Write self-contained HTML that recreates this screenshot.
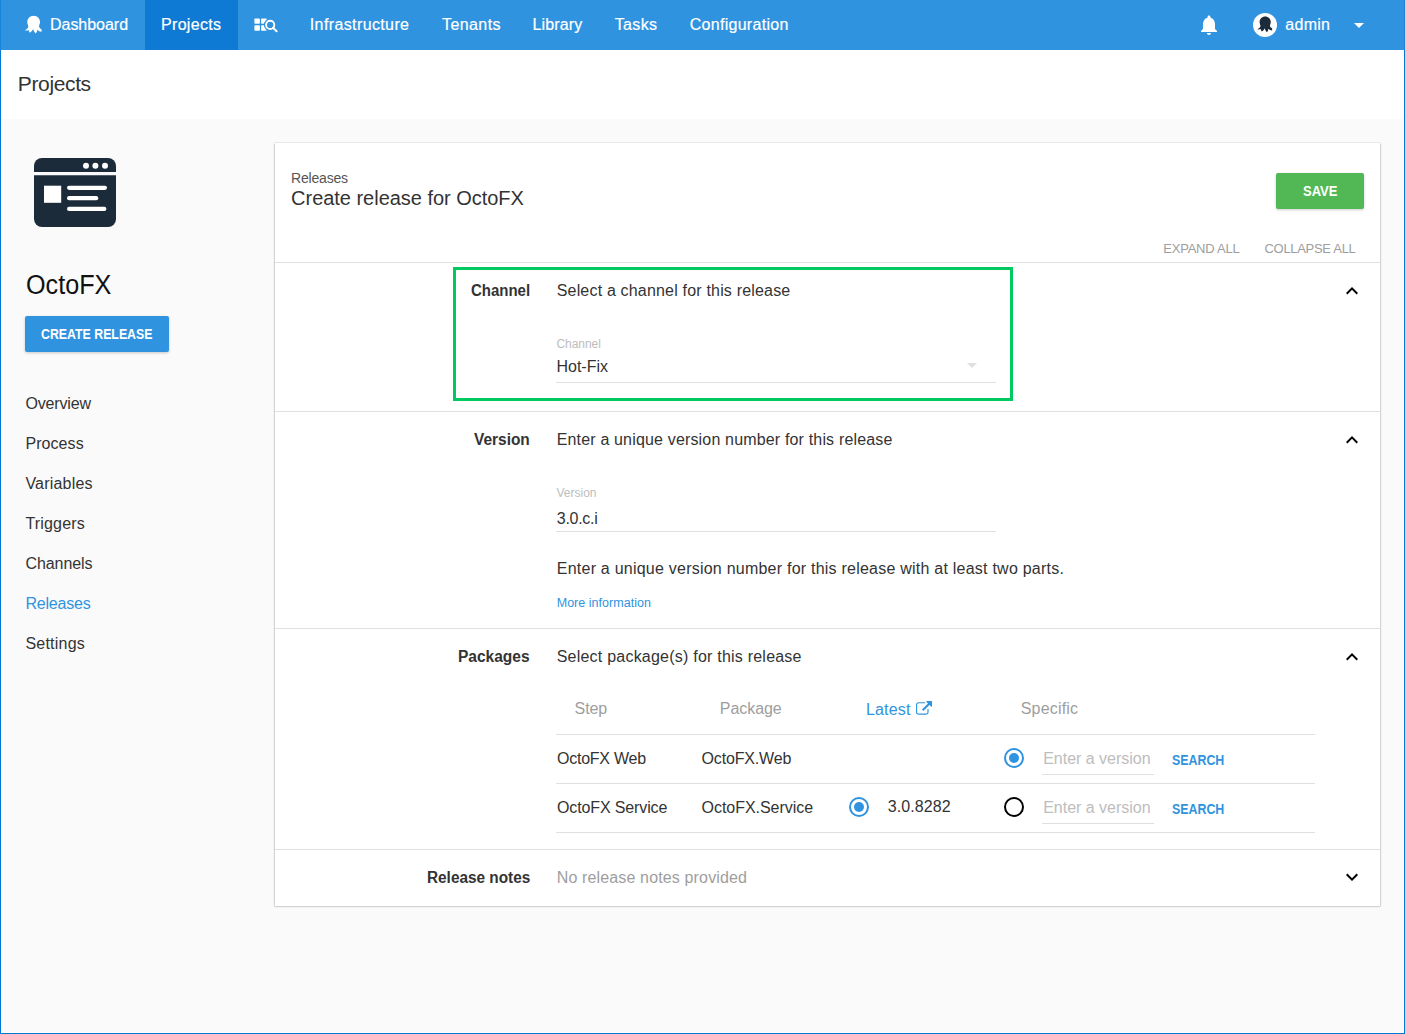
<!DOCTYPE html>
<html><head><meta charset="utf-8">
<style>
html,body{margin:0;padding:0;}
body{width:1405px;height:1034px;overflow:hidden;position:relative;background:#fafafa;font-family:"Liberation Sans",sans-serif;}
.t{position:absolute;white-space:nowrap;line-height:1;}
.r{position:absolute;}
svg{position:absolute;overflow:visible;}
</style></head><body>
<div class="r" style="left:0px;top:0px;width:1405px;height:50px;background:#2f93e0;"></div>
<div class="r" style="left:145px;top:0px;width:93px;height:50px;background:#0e7ad4;"></div>
<div class="r" style="left:0px;top:50px;width:1405px;height:69px;background:#ffffff;"></div>
<div class="r" style="left:0px;top:0px;width:1px;height:50px;background:#1784d9;"></div>
<div class="r" style="left:1404px;top:0px;width:1px;height:50px;background:#1784d9;"></div>
<div class="r" style="left:0px;top:50px;width:1px;height:984px;background:#0078d7;"></div>
<div class="r" style="left:1404px;top:50px;width:1px;height:984px;background:#0078d7;"></div>
<div class="r" style="left:0px;top:1033px;width:1405px;height:1px;background:#0078d7;"></div>
<div class="r" style="left:1px;top:119px;width:1px;height:914px;background:#ffffff;"></div>
<div class="r" style="left:1403px;top:119px;width:1px;height:914px;background:#ffffff;"></div>
<div class="r" style="left:1px;top:1032px;width:1403px;height:1px;background:#ffffff;"></div>
<div class="t " style="top:17px;font-size:16px;color:#fff;left:50.00px;letter-spacing:-0.031px;-webkit-text-stroke:0.2px #fff;">Dashboard</div>
<div class="t " style="top:17px;font-size:16px;color:#fff;left:161.00px;letter-spacing:0.314px;-webkit-text-stroke:0.2px #fff;">Projects</div>
<div class="t " style="top:17px;font-size:16px;color:#fff;left:309.80px;letter-spacing:0.381px;-webkit-text-stroke:0.2px #fff;">Infrastructure</div>
<div class="t " style="top:17px;font-size:16px;color:#fff;left:442.00px;letter-spacing:0.408px;-webkit-text-stroke:0.2px #fff;">Tenants</div>
<div class="t " style="top:17px;font-size:16px;color:#fff;left:532.40px;letter-spacing:0.150px;-webkit-text-stroke:0.2px #fff;">Library</div>
<div class="t " style="top:17px;font-size:16px;color:#fff;left:614.70px;letter-spacing:0.350px;-webkit-text-stroke:0.2px #fff;">Tasks</div>
<div class="t " style="top:17px;font-size:16px;color:#fff;left:689.70px;letter-spacing:0.287px;-webkit-text-stroke:0.2px #fff;">Configuration</div>
<div class="t " style="top:17px;font-size:16px;color:#fff;left:1285.30px;letter-spacing:0.275px;-webkit-text-stroke:0.2px #fff;">admin</div>
<svg style="left:24px;top:15px" width="20" height="20" viewBox="0 0 20 20"><path fill="#fff" d="M9.65 0.8C13.2 0.8 16 3.6 16 7C16 8.8 15.2 10 15 11.2C15.2 12.6 16.5 13.8 17.9 14.6L17.3 15.4L17.8 16.6C16.2 16.8 14.4 16 13.4 14.7C13.2 16.2 12.6 17.6 11.7 18.6C10.5 17.6 9.5 15.8 9.1 14.1C8.4 15.8 7.2 17.2 5.6 17.8C5.2 16.8 4.8 15.8 4.4 15C3.4 15.6 2 15.6 0.9 15.3C2.8 14.2 4.3 12.8 4.3 11.2C4 10 3.3 8.8 3.3 7C3.3 3.6 6.1 0.8 9.65 0.8Z"/></svg>
<svg style="left:254px;top:18px" width="24" height="14" viewBox="0 0 24 14">
<rect x="0.4" y="0.5" width="5.5" height="5.3" rx="0.8" fill="#fff"/>
<rect x="0.4" y="7.2" width="5.5" height="5.6" rx="0.8" fill="#fff"/>
<rect x="7.1" y="0.5" width="5.6" height="5.3" rx="0.8" fill="#fff"/>
<rect x="7.1" y="7.2" width="5.6" height="5.6" rx="0.8" fill="#fff"/>
<circle cx="16.2" cy="6.9" r="6.3" fill="#2f93e0"/>
<circle cx="16.2" cy="6.9" r="4.1" fill="none" stroke="#fff" stroke-width="1.9"/>
<line x1="19" y1="9.7" x2="22.6" y2="13.2" stroke="#fff" stroke-width="2" stroke-linecap="round"/>
</svg>
<svg style="left:1197px;top:13px" width="24" height="24" viewBox="0 0 24 24"><path fill="#fff" d="M12 22c1.1 0 2-.9 2-2h-4c0 1.1.89 2 2 2zm6-6v-5c0-3.07-1.64-5.64-4.5-6.32V4c0-.83-.67-1.5-1.5-1.5s-1.5.67-1.5 1.5v.68C7.63 5.36 6 7.92 6 11v5l-2 2v1h16v-1l-2-2z"/></svg>
<svg style="left:1253px;top:13px" width="24" height="24" viewBox="0 0 24 24"><circle cx="12" cy="12" r="12" fill="#fff"/>
<g transform="translate(3.7,2.8) scale(0.88)"><path fill="#1b2b3a" d="M9.65 0.8C13.2 0.8 16 3.6 16 7C16 8.8 15.2 10 15 11.2C15.2 12.6 16.5 13.8 17.9 14.6L17.3 15.4L17.8 16.6C16.2 16.8 14.4 16 13.4 14.7C13.2 16.2 12.6 17.6 11.7 18.6C10.5 17.6 9.5 15.8 9.1 14.1C8.4 15.8 7.2 17.2 5.6 17.8C5.2 16.8 4.8 15.8 4.4 15C3.4 15.6 2 15.6 0.9 15.3C2.8 14.2 4.3 12.8 4.3 11.2C4 10 3.3 8.8 3.3 7C3.3 3.6 6.1 0.8 9.65 0.8Z"/></g></svg>
<svg style="left:1354px;top:23px" width="10" height="5" viewBox="0 0 10 5"><path d="M0 0h10L5 5z" fill="#fff"/></svg>
<div class="t " style="top:73px;font-size:21px;color:#333333;left:17.80px;letter-spacing:-0.364px;">Projects</div>
<svg style="left:34px;top:158px" width="82" height="69" viewBox="0 0 82 69">
<path d="M8 0h66a8 8 0 0 1 8 8v6H0V8a8 8 0 0 1 8-8z" fill="#1b2b3a"/>
<path d="M0 17.3h82V61a8 8 0 0 1-8 8H8a8 8 0 0 1-8-8z" fill="#1b2b3a"/>
<circle cx="52" cy="7.8" r="3" fill="#fff"/><circle cx="61.4" cy="7.8" r="3" fill="#fff"/><circle cx="71" cy="7.8" r="3" fill="#fff"/>
<rect x="10" y="27.7" width="17.2" height="17.1" fill="#fff"/>
<rect x="33" y="27.7" width="40" height="4.2" rx="2.1" fill="#fff"/>
<rect x="33" y="38.1" width="31.3" height="4.2" rx="2.1" fill="#fff"/>
<rect x="33" y="48.8" width="39.4" height="4.2" rx="2.1" fill="#fff"/>
</svg>
<div class="t " style="top:272px;font-size:27px;color:#111;transform:scaleX(0.9322);transform-origin:0 0;left:25.90px;">OctoFX</div>
<div class="r" style="left:25px;top:316px;width:144px;height:36px;background:#2f93e0;border-radius:2px;box-shadow:0 1px 3px rgba(0,0,0,0.2)"></div>
<div class="t " style="top:327px;font-size:14px;color:#fff;font-weight:bold;transform:scaleX(0.8811);transform-origin:0 0;left:41.40px;">CREATE RELEASE</div>
<div class="t " style="top:396px;font-size:16px;color:#333333;left:25.40px;letter-spacing:-0.150px;">Overview</div>
<div class="t " style="top:436px;font-size:16px;color:#333333;left:25.40px;letter-spacing:0.083px;">Process</div>
<div class="t " style="top:476px;font-size:16px;color:#333333;left:25.40px;letter-spacing:0.213px;">Variables</div>
<div class="t " style="top:516px;font-size:16px;color:#333333;left:25.40px;letter-spacing:0.186px;">Triggers</div>
<div class="t " style="top:556px;font-size:16px;color:#333333;left:25.40px;letter-spacing:-0.057px;">Channels</div>
<div class="t " style="top:596px;font-size:16px;color:#2f93e0;left:25.40px;letter-spacing:-0.200px;">Releases</div>
<div class="t " style="top:636px;font-size:16px;color:#333333;left:25.40px;letter-spacing:0.229px;">Settings</div>
<div class="r" style="left:273px;top:143px;width:1px;height:763px;background:#f3f3f3;"></div>
<div class="r" style="left:1381px;top:143px;width:1px;height:763px;background:#f3f3f3;"></div>
<div class="r" style="left:274px;top:144px;width:1px;height:762px;background:#d4d4d4;"></div>
<div class="r" style="left:1380px;top:144px;width:1px;height:762px;background:#d4d4d4;"></div>
<div class="r" style="left:275px;top:142px;width:1105px;height:1px;background:#e8e8e8;"></div>
<div class="r" style="left:275px;top:906px;width:1105px;height:1px;background:#d3d3d3;"></div>
<div class="r" style="left:275px;top:907px;width:1105px;height:1px;background:#f2f2f2;"></div>
<div class="r" style="left:274px;top:143px;width:1px;height:1px;background:#e9e9e9;"></div>
<div class="r" style="left:1380px;top:143px;width:1px;height:1px;background:#e9e9e9;"></div>
<div class="r" style="left:274px;top:906px;width:1px;height:1px;background:#e6e6e6;"></div>
<div class="r" style="left:1380px;top:906px;width:1px;height:1px;background:#e6e6e6;"></div>
<div class="r" style="left:275px;top:143px;width:1105px;height:763px;background:#ffffff;"></div>
<div class="t " style="top:171px;font-size:14px;color:#555;left:291.10px;letter-spacing:-0.193px;">Releases</div>
<div class="t " style="top:188px;font-size:20px;color:#333333;left:291.10px;letter-spacing:-0.027px;">Create release for OctoFX</div>
<div class="r" style="left:1276px;top:173px;width:88px;height:36px;background:#52b755;border-radius:2px;box-shadow:0 1px 3px rgba(0,0,0,0.2)"></div>
<div class="t " style="top:184px;font-size:14px;color:#fff;font-weight:bold;transform:scaleX(0.9299);transform-origin:0 0;left:1302.90px;">SAVE</div>
<div class="t " style="top:242px;font-size:13px;color:#9e9e9e;left:1163.30px;letter-spacing:-0.233px;">EXPAND ALL</div>
<div class="t " style="top:242px;font-size:13px;color:#9e9e9e;left:1264.50px;letter-spacing:-0.305px;">COLLAPSE ALL</div>
<div class="r" style="left:275px;top:262px;width:1105px;height:1px;background:#e0e0e0;"></div>
<div class="r" style="left:275px;top:411px;width:1105px;height:1px;background:#e0e0e0;"></div>
<div class="r" style="left:275px;top:628px;width:1105px;height:1px;background:#e0e0e0;"></div>
<div class="r" style="left:275px;top:849px;width:1105px;height:1px;background:#e0e0e0;"></div>
<div class="r" style="left:453px;top:267px;width:554px;height:128px;border:3px solid #00c95f"></div>
<div class="t " style="top:283px;font-size:16px;color:#333333;font-weight:bold;transform:scaleX(0.9366);transform-origin:0 0;left:470.80px;">Channel</div>
<div class="t " style="top:283px;font-size:16px;color:#333333;left:556.70px;letter-spacing:0.184px;">Select a channel for this release</div>
<svg style="left:1340px;top:279px" width="24" height="24" viewBox="0 0 24 24"><path fill="#000" d="M12 8l-6 6 1.41 1.41L12 10.83l4.59 4.58L18 14z"/></svg>
<div class="t " style="top:338px;font-size:12px;color:#bdbdbd;left:556.50px;letter-spacing:-0.050px;">Channel</div>
<div class="t " style="top:359px;font-size:16px;color:#333333;left:556.50px;letter-spacing:-0.008px;">Hot-Fix</div>
<div class="r" style="left:556px;top:382px;width:440px;height:1px;background:#e0e0e0;"></div>
<svg style="left:967px;top:363px" width="10" height="5" viewBox="0 0 10 5"><path d="M0 0h10L5 5z" fill="#e0e0e0"/></svg>
<div class="t " style="top:432px;font-size:16px;color:#333333;font-weight:bold;transform:scaleX(0.9654);transform-origin:0 0;left:474.10px;">Version</div>
<div class="t " style="top:432px;font-size:16px;color:#333333;left:556.70px;letter-spacing:0.167px;">Enter a unique version number for this release</div>
<svg style="left:1340px;top:428px" width="24" height="24" viewBox="0 0 24 24"><path fill="#000" d="M12 8l-6 6 1.41 1.41L12 10.83l4.59 4.58L18 14z"/></svg>
<div class="t " style="top:487px;font-size:12px;color:#bdbdbd;left:556.50px;">Version</div>
<div class="t " style="top:511px;font-size:16px;color:#333333;left:556.80px;letter-spacing:-0.283px;">3.0.c.i</div>
<div class="r" style="left:556px;top:531px;width:440px;height:1px;background:#e0e0e0;"></div>
<div class="t " style="top:561px;font-size:16px;color:#333333;left:556.80px;letter-spacing:0.231px;">Enter a unique version number for this release with at least two parts.</div>
<div class="t " style="top:597px;font-size:12.5px;color:#2f93e0;left:556.70px;letter-spacing:0.033px;">More information</div>
<div class="t " style="top:649px;font-size:16px;color:#333333;font-weight:bold;transform:scaleX(0.9695);transform-origin:0 0;left:458.30px;">Packages</div>
<div class="t " style="top:649px;font-size:16px;color:#333333;left:556.70px;letter-spacing:0.223px;">Select package(s) for this release</div>
<svg style="left:1340px;top:645px" width="24" height="24" viewBox="0 0 24 24"><path fill="#000" d="M12 8l-6 6 1.41 1.41L12 10.83l4.59 4.58L18 14z"/></svg>
<div class="t " style="top:701px;font-size:16px;color:#9e9e9e;left:574.60px;letter-spacing:-0.100px;">Step</div>
<div class="t " style="top:701px;font-size:16px;color:#9e9e9e;left:719.80px;letter-spacing:-0.058px;">Package</div>
<div class="t " style="top:702px;font-size:16px;color:#2f93e0;left:866.00px;letter-spacing:0.160px;">Latest</div>
<svg style="left:915.5px;top:700.5px" width="16" height="16" viewBox="0 0 1792 1792"><path fill="#2f93e0" d="M1408 928v320q0 119-84.5 203.5T1120 1536H288q-119 0-203.5-84.5T0 1248V416q0-119 84.5-203.5T288 128h704q14 0 23 9t9 23v64q0 14-9 23t-23 9H288q-66 0-113 47t-47 113v832q0 66 47 113t113 47h832q66 0 113-47t47-113V928q0-14 9-23t23-9h64q14 0 23 9t9 23zm384-864v512q0 26-19 45t-45 19-45-19l-176-176-652 652q-10 10-23 10t-23-10L695 983q-10-10-10-23t10-23l652-652-176-176q-19-19-19-45t19-45 45-19h512q26 0 45 19t19 45z"/></svg>
<div class="t " style="top:701px;font-size:16px;color:#9e9e9e;left:1020.70px;letter-spacing:0.200px;">Specific</div>
<div class="r" style="left:556px;top:734px;width:759px;height:1px;background:#e0e0e0;"></div>
<div class="r" style="left:556px;top:783px;width:759px;height:1px;background:#e0e0e0;"></div>
<div class="r" style="left:556px;top:832px;width:759px;height:1px;background:#e0e0e0;"></div>
<div class="t " style="top:751px;font-size:16px;color:#333333;left:557.00px;letter-spacing:-0.244px;">OctoFX Web</div>
<div class="t " style="top:751px;font-size:16px;color:#333333;left:701.60px;letter-spacing:-0.178px;">OctoFX.Web</div>
<svg style="left:1002px;top:746px" width="24" height="24" viewBox="0 0 24 24"><circle cx="12" cy="12" r="9" fill="none" stroke="#2f93e0" stroke-width="2"/><circle cx="12" cy="12" r="5" fill="#2f93e0"/></svg>
<div class="t " style="top:751px;font-size:16px;color:#bdbdbd;left:1043.20px;letter-spacing:-0.014px;">Enter a version</div>
<div class="r" style="left:1042px;top:774px;width:112px;height:1px;background:#e0e0e0;"></div>
<div class="t " style="top:753px;font-size:14px;color:#2f93e0;font-weight:bold;transform:scaleX(0.8849);transform-origin:0 0;left:1172.00px;">SEARCH</div>
<div class="t " style="top:800px;font-size:16px;color:#333333;left:557.00px;letter-spacing:-0.127px;">OctoFX Service</div>
<div class="t " style="top:800px;font-size:16px;color:#333333;left:701.60px;letter-spacing:-0.042px;">OctoFX.Service</div>
<svg style="left:847px;top:795px" width="24" height="24" viewBox="0 0 24 24"><circle cx="12" cy="12" r="9" fill="none" stroke="#2f93e0" stroke-width="2"/><circle cx="12" cy="12" r="5" fill="#2f93e0"/></svg>
<div class="t " style="top:799px;font-size:16px;color:#333333;left:887.80px;letter-spacing:0.086px;">3.0.8282</div>
<svg style="left:1002px;top:795px" width="24" height="24" viewBox="0 0 24 24"><circle cx="12" cy="12" r="9" fill="none" stroke="#000" stroke-width="2"/></svg>
<div class="t " style="top:800px;font-size:16px;color:#bdbdbd;left:1043.20px;letter-spacing:-0.014px;">Enter a version</div>
<div class="r" style="left:1042px;top:823px;width:112px;height:1px;background:#e0e0e0;"></div>
<div class="t " style="top:802px;font-size:14px;color:#2f93e0;font-weight:bold;transform:scaleX(0.8849);transform-origin:0 0;left:1172.00px;">SEARCH</div>
<div class="t " style="top:870px;font-size:16px;color:#333333;font-weight:bold;transform:scaleX(0.9591);transform-origin:0 0;left:426.70px;">Release notes</div>
<div class="t " style="top:870px;font-size:16px;color:#9e9e9e;left:556.70px;letter-spacing:0.146px;">No release notes provided</div>
<svg style="left:1340px;top:865px" width="24" height="24" viewBox="0 0 24 24"><path fill="#000" d="M16.59 8.59L12 13.17 7.41 8.59 6 10l6 6 6-6z"/></svg>
</body></html>
